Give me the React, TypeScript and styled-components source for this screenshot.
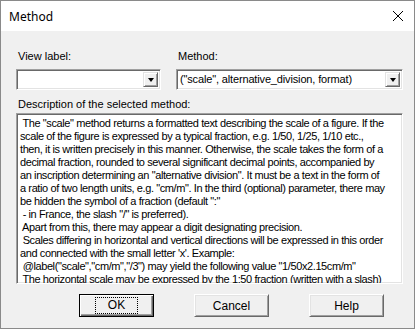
import React from "react";
import styled, { createGlobalStyle } from "styled-components";

const GlobalStyle = createGlobalStyle`
  html, body {
    margin: 0;
    padding: 0;
    background: #ffffff;
  }
`;

const Window = styled.div`
  width: 415px;
  height: 329px;
  box-sizing: border-box;
  border: 1px solid #8a8a8a;
  display: flex;
  flex-direction: column;
  font-family: "Liberation Sans", Arial, sans-serif;
  font-size: 11px;
  color: #000;
  overflow: hidden;
`;

const TitleBar = styled.div`
  height: 30px;
  flex: none;
  background: #ffffff;
  display: flex;
  align-items: center;
  justify-content: space-between;
  padding: 0 8px 0 8px;
`;

const Title = styled.span`
  font-family: "Noto Sans", "Segoe UI", sans-serif;
  font-size: 12px;
  color: #000;
`;

const Body = styled.div`
  flex: 1;
  background: #f0f0f0;
  padding: 19px 11px 0 15px;
  display: flex;
  flex-direction: column;
`;

const FieldRow = styled.div`
  display: flex;
  gap: 15px;
`;

const Field = styled.div<{ $width: number }>`
  width: ${({ $width }) => $width}px;
  display: flex;
  flex-direction: column;
  gap: 6px;
`;

const Label = styled.span<{ $indent?: number }>`
  line-height: 13px;
  padding-left: ${({ $indent }) => $indent ?? 2}px;
  white-space: nowrap;
`;

const Combo = styled.div`
  height: 21px;
  box-sizing: border-box;
  background: #fff;
  border-top: 1px solid #a0a0a0;
  border-left: 1px solid #a0a0a0;
  border-right: 1px solid #fff;
  border-bottom: 1px solid #fff;
  box-shadow: inset 1px 1px 0 #696969, inset -1px -1px 0 #e3e3e3;
  display: flex;
  align-items: center;
  padding: 0 2px 0 3px;
`;

const ComboText = styled.span`
  flex: 1;
  white-space: nowrap;
  overflow: hidden;
  line-height: 13px;
  letter-spacing: -0.15px;
`;

const DropButton = styled.div`
  width: 15px;
  height: 15px;
  box-sizing: border-box;
  background: #f0f0f0;
  border-top: 1px solid #e3e3e3;
  border-left: 1px solid #e3e3e3;
  border-right: 1px solid #696969;
  border-bottom: 1px solid #696969;
  box-shadow: inset 1px 1px 0 #fff, inset -1px -1px 0 #a0a0a0;
  display: flex;
  align-items: center;
  justify-content: center;
`;

const Arrow = styled.span`
  width: 0;
  height: 0;
  border-left: 3.5px solid transparent;
  border-right: 3.5px solid transparent;
  border-top: 4px solid #000;
  margin-top: 1px;
`;

const DescLabel = styled(Label)`
  margin-top: 8px;
`;

const TextArea = styled.div`
  margin-top: 2px;
  height: 171px;
  width: 387px;
  box-sizing: border-box;
  background: #fff;
  border-top: 1px solid #a0a0a0;
  border-left: 1px solid #a0a0a0;
  border-right: 1px solid #fff;
  border-bottom: 1px solid #fff;
  box-shadow: inset 1px 1px 0 #696969, inset -1px -1px 0 #e3e3e3;
  padding: 3px 2px 0 3px;
  overflow: hidden;
`;

const Line = styled.div`
  line-height: 13px;
  white-space: pre;
  letter-spacing: -0.4px;
`;

const ButtonRow = styled.div`
  display: flex;
  gap: 40px;
  padding-left: 63px;
  margin-top: 10px;
`;

const Button = styled.div<{ $default?: boolean }>`
  width: 75px;
  height: 23px;
  box-sizing: border-box;
  background: #f0f0f0;
  display: flex;
  align-items: center;
  justify-content: center;
  border: 1px solid ${({ $default }) => ($default ? "#000" : "#fff")};
  border-right-color: ${({ $default }) => ($default ? "#000" : "#696969")};
  border-bottom-color: ${({ $default }) => ($default ? "#000" : "#696969")};
  box-shadow: ${({ $default }) =>
    $default
      ? "inset 1px 1px 0 #fff, inset -1px -1px 0 #696969, inset -2px -2px 0 #a0a0a0"
      : "inset 1px 1px 0 #e3e3e3, inset -1px -1px 0 #a0a0a0"};
  font-size: 12px;
`;

const Focus = styled.span`
  border: 1px dotted #000;
  padding: 1px 12px;
  line-height: 13px;
`;

const lines = [
  ' The "scale" method returns a formatted text describing the scale of a figure. If the',
  "scale of the figure is expressed by a typical fraction, e.g. 1/50, 1/25, 1/10 etc.,",
  "then, it is written precisely in this manner. Otherwise, the scale takes the form of a",
  "decimal fraction, rounded to several significant decimal points, accompanied by",
  'an inscription determining an "alternative division". It must be a text in the form of',
  'a ratio of two length units, e.g. "cm/m". In the third (optional) parameter, there may',
  'be hidden the symbol of a fraction (default ":"',
  ' - in France, the slash "/" is preferred).',
  " Apart from this, there may appear a digit designating precision.",
  " Scales differing in horizontal and vertical directions will be expressed in this order",
  "and connected with the small letter 'x'. Example:",
  ' @label("scale","cm/m","/3") may yield the following value "1/50x2.15cm/m"',
  " The horizontal scale may be expressed by the 1:50 fraction (written with a slash)",
];

const CloseIcon = () => (
  <svg width="12" height="12" viewBox="0 0 12 12" style={{ marginRight: 2 }}>
    <path d="M1 1 L11 11 M11 1 L1 11" stroke="#000" strokeWidth="1" fill="none" />
  </svg>
);

export default function App() {
  return (
    <>
      <GlobalStyle />
      <Window>
        <TitleBar>
          <Title>Method</Title>
          <CloseIcon />
        </TitleBar>
        <Body>
          <FieldRow>
            <Field $width={145}>
              <Label>View label:</Label>
              <Combo>
                <ComboText />
                <DropButton>
                  <Arrow />
                </DropButton>
              </Combo>
            </Field>
            <Field $width={227}>
              <Label>Method:</Label>
              <Combo>
                <ComboText>("scale", alternative_division, format)</ComboText>
                <DropButton>
                  <Arrow />
                </DropButton>
              </Combo>
            </Field>
          </FieldRow>
          <DescLabel>Description of the selected method:</DescLabel>
          <TextArea>
            {lines.map((l, i) => (
              <Line key={i}>{l}</Line>
            ))}
          </TextArea>
          <ButtonRow>
            <Button $default>
              <Focus>OK</Focus>
            </Button>
            <Button>Cancel</Button>
            <Button>Help</Button>
          </ButtonRow>
        </Body>
      </Window>
    </>
  );
}
